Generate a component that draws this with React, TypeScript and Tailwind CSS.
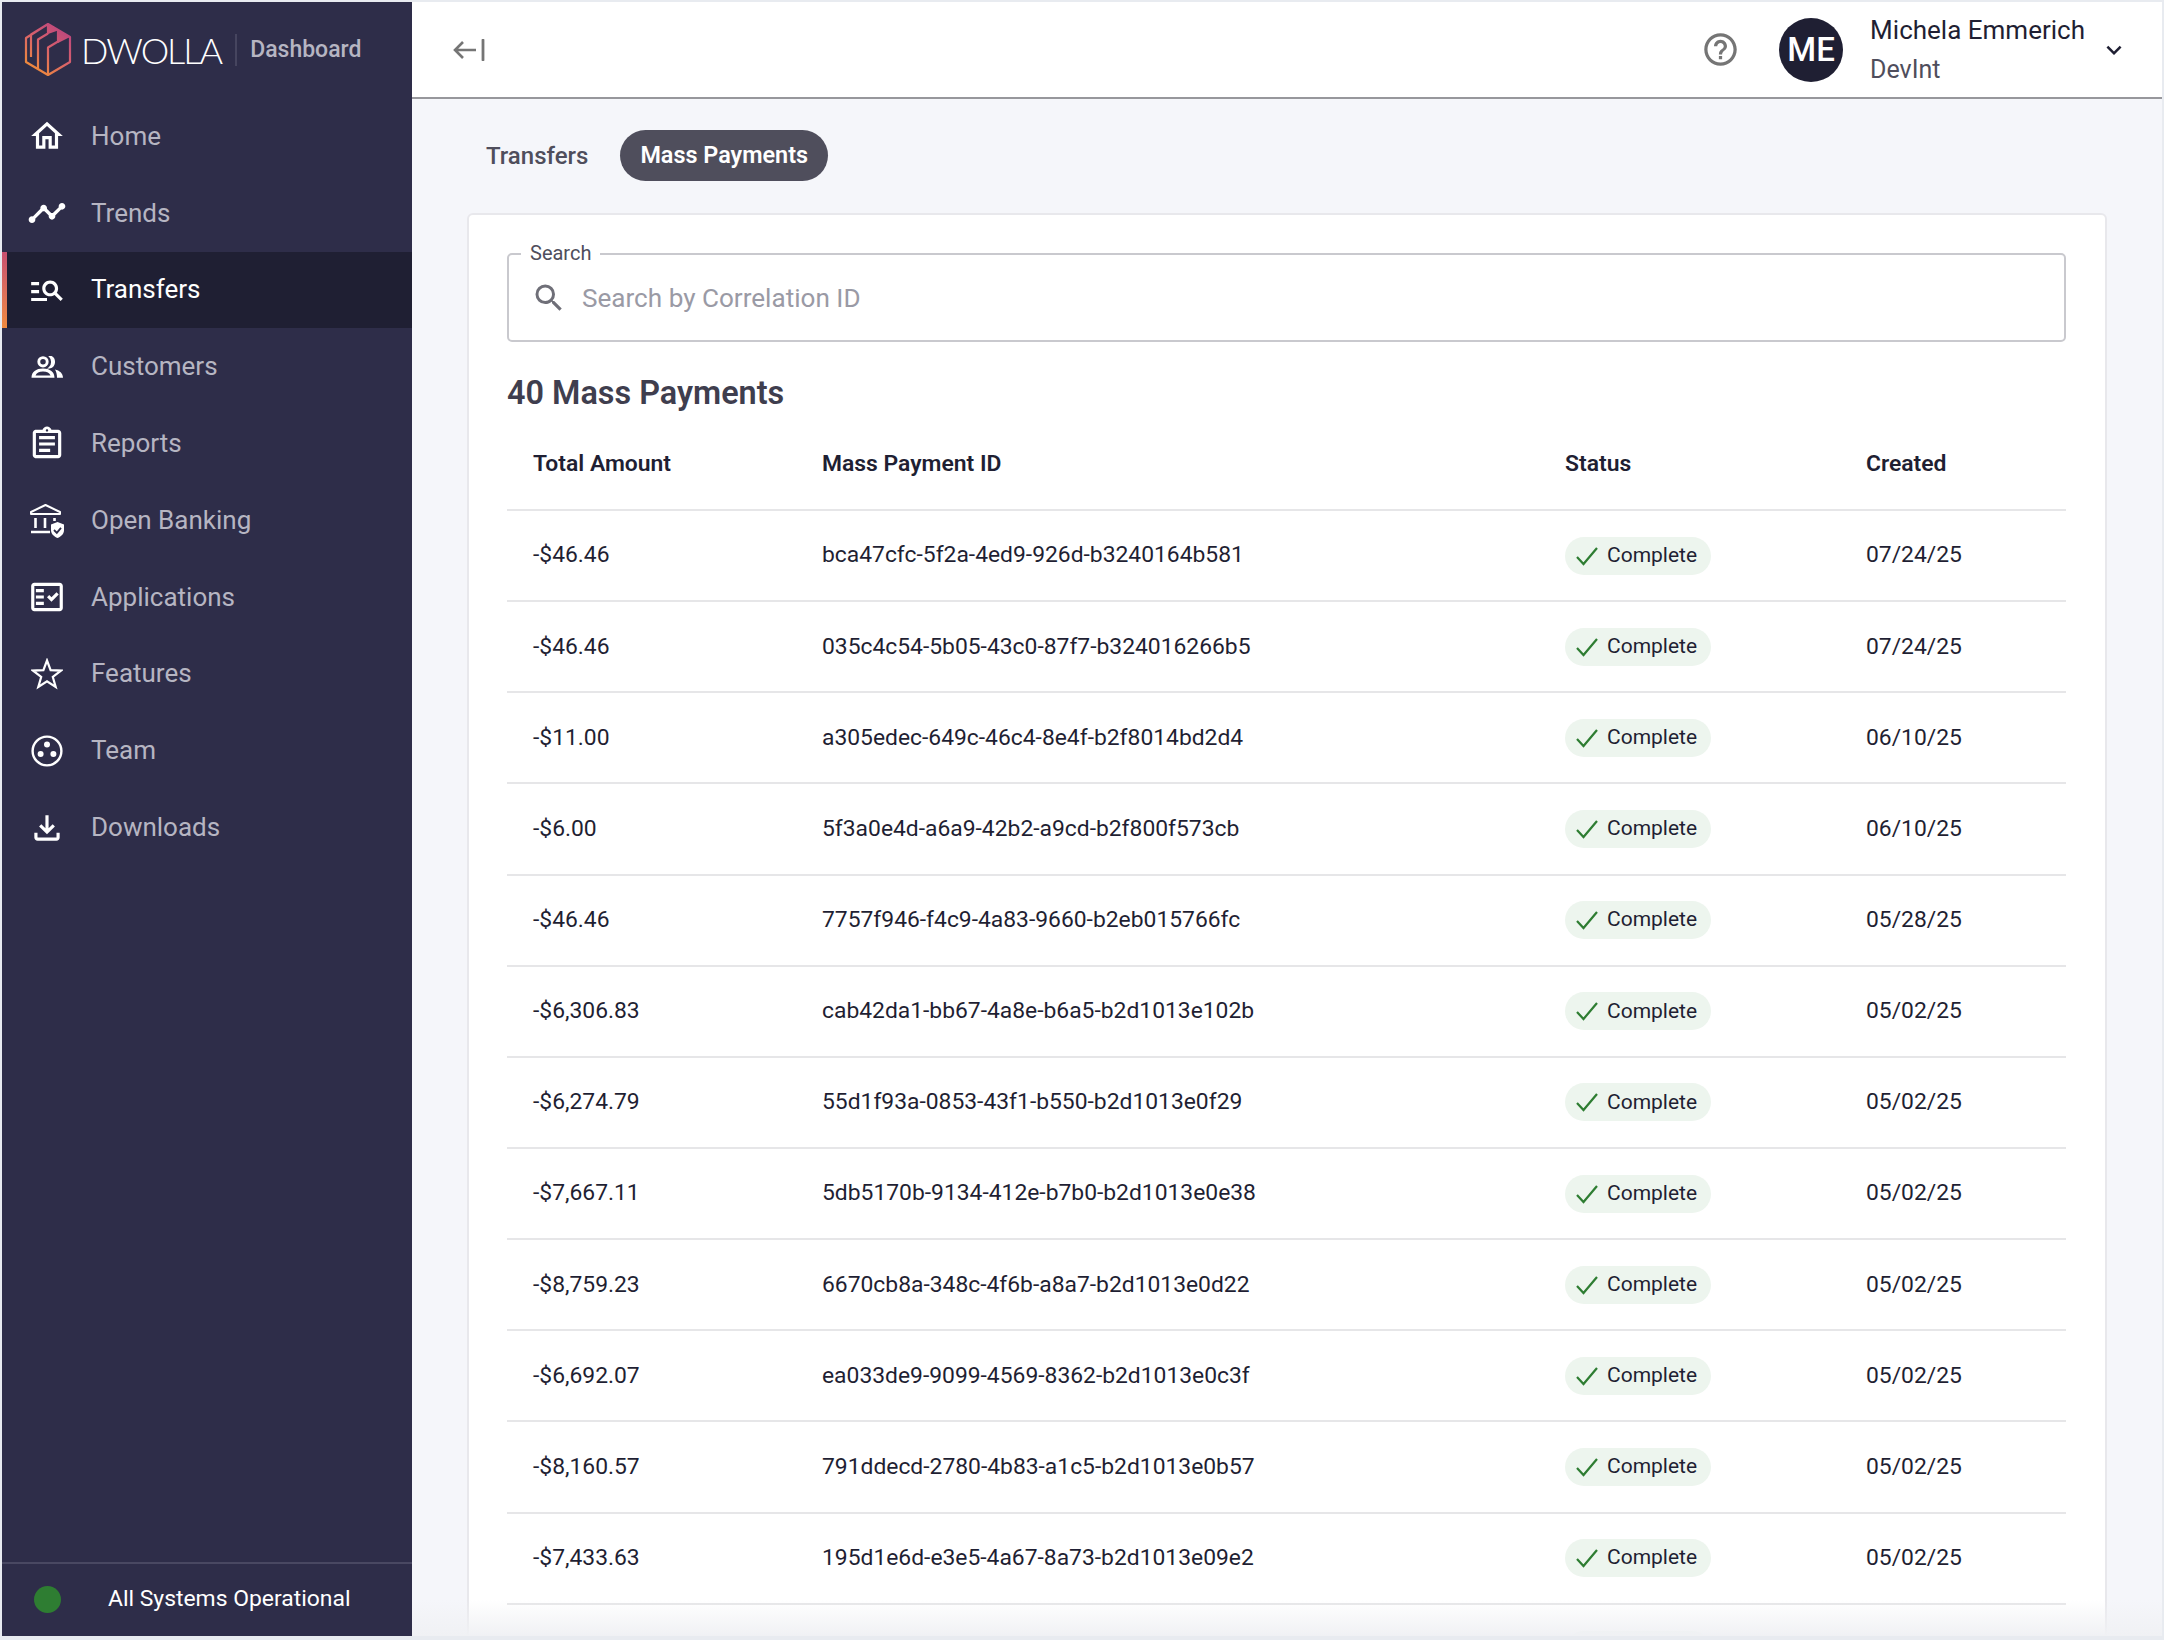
import React from "react";
import {
  MdOutlineManageSearch,
  MdOutlineAssignment,
  MdOutlineFactCheck,
  MdOutlineFileDownload,
  MdOutlineHelpOutline,
  MdSearch,
  MdExpandMore,
  MdTimeline,
  MdOutlineHome,
} from "react-icons/md";

const Bank = () => (
  <svg viewBox="0 0 36 36" className="w-[36px] h-[36px]" fill="none">
    <path d="M2 10 L16.5 3 L31 10 V12 H2 Z" stroke="#fff" strokeWidth="2" strokeLinejoin="round" />
    <path d="M6.5 16 V26 M16 16 V26 M25.5 16 V19 M2 30 H21" stroke="#fff" strokeWidth="2.6" />
    <path d="M28.5 20 L35 22.5 V28 C35 32 32 34.5 28.5 36 C25 34.5 22 32 22 28 V22.5 Z" fill="#fff" />
    <path d="M25 28 L27.8 30.8 L32 25.8" stroke="#2e2d49" strokeWidth="1.8" />
  </svg>
);

const Customers = () => (
  <svg viewBox="0 0 32 22" className="w-[32px] h-[22px]" fill="none">
    <circle cx="12" cy="5.8" r="4.2" stroke="#fff" strokeWidth="2.9" />
    <path d="M18.5 0.2 A5.8 5.8 0 0 1 18.5 11.6 A8 8 0 0 0 18.5 0.2 Z" fill="#fff" stroke="#fff" strokeWidth="1.6" />
    <path d="M0.5 21.8 C0.5 16 5 12.6 12 12.6 C19 12.6 23.5 16 23.5 21.8 Z M4.5 19.4 H19.5 C18.5 16.8 16 15.4 12 15.4 C8 15.4 5.5 16.8 4.5 19.4 Z" fill="#fff" fillRule="evenodd" />
    <path d="M24 13.6 C28.5 14.6 32 17.5 32 21.8 H26 C26 18.5 25.3 16 24 13.6 Z" fill="#fff" />
  </svg>
);

const Star = () => (
  <svg viewBox="0 0 32 32" className="w-[32px] h-[32px]" fill="none">
    <path d="M16 2.5 L19.6 12.2 L30 12.6 L21.8 19 L24.7 29 L16 23.3 L7.3 29 L10.2 19 L2 12.6 L12.4 12.2 Z" stroke="#fff" strokeWidth="2.2" strokeLinejoin="miter" />
  </svg>
);

const Team = () => (
  <svg viewBox="0 0 32 32" className="w-[32px] h-[32px]" fill="none">
    <circle cx="16" cy="16" r="14.4" stroke="#fff" strokeWidth="2.4" />
    <circle cx="16" cy="9.6" r="3" fill="#fff" />
    <circle cx="9.6" cy="19" r="3" fill="#fff" />
    <circle cx="22.4" cy="19" r="3" fill="#fff" />
  </svg>
);

const Logo = () => (
  <svg viewBox="4 4 48 56" className="w-[48px] h-[56px] shrink-0" fill="none">
    <defs>
      <linearGradient id="lg" x1="46" y1="8" x2="12" y2="52" gradientUnits="userSpaceOnUse">
        <stop offset="0" stopColor="#b8437f" />
        <stop offset="0.5" stopColor="#d8606c" />
        <stop offset="1" stopColor="#f08c3a" />
      </linearGradient>
    </defs>
    <path
      d="M28 6 L50 19 V44 L28 57 L6 44 V20 Z M28 6 L11 16.5 V39 M18 40 V21.5 L28 15.5 M28 15.5 V6 M28 51 V29.5 L38 23.5 V12.5 M28 57 L28 51 M18 50.8 V40"
      stroke="url(#lg)"
      strokeWidth="2.2"
      strokeLinejoin="round"
    />
    <path d="M28 6 L50 19 L38 25 V12.5 L28 16 Z" fill="url(#lg)" />
  </svg>
);

const navIcon = "w-[38px] h-[38px] text-white";

const nav: { label: string; icon: React.ReactNode; active?: boolean }[] = [
  { label: "Home", icon: <MdOutlineHome className={navIcon} /> },
  { label: "Trends", icon: <MdTimeline className="w-[40px] h-[40px] text-white" /> },
  { label: "Transfers", icon: <MdOutlineManageSearch className={navIcon} />, active: true },
  { label: "Customers", icon: <Customers /> },
  { label: "Reports", icon: <MdOutlineAssignment className={navIcon} /> },
  { label: "Open Banking", icon: <Bank /> },
  { label: "Applications", icon: <MdOutlineFactCheck className={navIcon} /> },
  { label: "Features", icon: <Star /> },
  { label: "Team", icon: <Team /> },
  { label: "Downloads", icon: <MdOutlineFileDownload className={navIcon} /> },
];

const rows = [
  ["-$46.46", "bca47cfc-5f2a-4ed9-926d-b3240164b581", "07/24/25"],
  ["-$46.46", "035c4c54-5b05-43c0-87f7-b324016266b5", "07/24/25"],
  ["-$11.00", "a305edec-649c-46c4-8e4f-b2f8014bd2d4", "06/10/25"],
  ["-$6.00", "5f3a0e4d-a6a9-42b2-a9cd-b2f800f573cb", "06/10/25"],
  ["-$46.46", "7757f946-f4c9-4a83-9660-b2eb015766fc", "05/28/25"],
  ["-$6,306.83", "cab42da1-bb67-4a8e-b6a5-b2d1013e102b", "05/02/25"],
  ["-$6,274.79", "55d1f93a-0853-43f1-b550-b2d1013e0f29", "05/02/25"],
  ["-$7,667.11", "5db5170b-9134-412e-b7b0-b2d1013e0e38", "05/02/25"],
  ["-$8,759.23", "6670cb8a-348c-4f6b-a8a7-b2d1013e0d22", "05/02/25"],
  ["-$6,692.07", "ea033de9-9099-4569-8362-b2d1013e0c3f", "05/02/25"],
  ["-$8,160.57", "791ddecd-2780-4b83-a1c5-b2d1013e0b57", "05/02/25"],
  ["-$7,433.63", "195d1e6d-e3e5-4a67-8a73-b2d1013e09e2", "05/02/25"],
];

const gridCols = "grid grid-cols-[289px_743px_301px_1fr] pl-[26px] items-center";

const Pill = () => (
  <span className="inline-flex items-center h-[38px] w-[146px] rounded-full bg-[#edf5ee] pl-[10px] text-[#1f1f33] text-[21px]">
    <svg viewBox="0 0 24 24" className="w-[24px] h-[24px] shrink-0" fill="none">
      <path d="M2 13 L8.5 20 L22 4" stroke="#2e7d32" strokeWidth="2.2" />
    </svg>
    <span className="ml-[8px]">Complete</span>
  </span>
);

export default function App() {
  return (
    <div className="w-[2164px] h-[1640px] overflow-hidden bg-[#e8ebf0] pt-[2px] pl-[2px] pr-[2px] pb-[4px] font-['Roboto',sans-serif]">
      <div className="relative flex h-full w-full bg-[#f5f6fa] overflow-hidden">
        <aside className="w-[410px] shrink-0 h-full bg-[#2e2d49] flex flex-col">
          <div className="h-[96px] shrink-0 flex items-center pl-[22px]">
            <Logo />
            <span className="ml-[9px] font-['Lato',sans-serif] font-light text-[36px] leading-none text-white tracking-[-2px]">DWOLLA</span>
            <span className="ml-[14px] w-[2px] h-[32px] bg-[#46455f]" />
            <span className="ml-[13px] text-[23px] font-medium text-[#b6b5c2]">Dashboard</span>
          </div>
          <nav className="flex flex-col">
            {nav.map((n) => (
              <div
                key={n.label}
                className={`relative h-[76.8px] flex items-center ${n.active ? "bg-[#1f1f33] text-white" : "text-[#b6b5c2]"}`}
              >
                {n.active && (
                  <span className="absolute left-0 top-0 bottom-0 w-[5px] bg-gradient-to-b from-[#c8506f] to-[#f08a3c]" />
                )}
                <span className="w-[89px] shrink-0 flex justify-center">{n.icon}</span>
                <span className="text-[26px] font-normal">{n.label}</span>
              </div>
            ))}
          </nav>
          <div className="mt-auto h-[74px] border-t-2 border-[#494862] flex items-center pl-[32px] pb-[2px]">
            <span className="w-[27px] h-[27px] rounded-full bg-[#2e7d32]" />
            <span className="ml-[47px] text-[22.9px] text-white">All Systems Operational</span>
          </div>
        </aside>

        <main className="flex-1 flex flex-col min-w-0">
          <header className="h-[97px] shrink-0 bg-white border-b-2 border-[#97979c] flex items-center pl-[40px] pr-[33px]">
            <svg viewBox="0 0 34 22" className="w-[34px] h-[22px]" fill="none">
              <path d="M24 11 H3 M11 3 L3 11 L11 19" stroke="#757575" strokeWidth="2.6" />
              <path d="M31 1 V21" stroke="#757575" strokeWidth="2.8" strokeLinecap="round" />
            </svg>
            <MdOutlineHelpOutline className="ml-auto w-[39px] h-[39px] text-[#757575]" />
            <div className="ml-[39px] w-[64px] h-[64px] rounded-full bg-[#1f1f33] flex items-center justify-center text-white text-[33px] font-medium">ME</div>
            <div className="ml-[27px] flex flex-col">
              <span className="text-[26px] leading-[39px] text-[#1f1f33]">Michela Emmerich</span>
              <span className="text-[25px] leading-[39px] text-[#4f4e5c]">DevInt</span>
            </div>
            <MdExpandMore className="ml-[14px] w-[30px] h-[30px] text-[#1f1f33]" />
          </header>

          <div className="flex-1 min-h-0 pl-[55px] pr-[55px] pt-[31px]">
            <div className="flex items-center gap-[13px] h-[51px]">
              <span className="h-[51px] px-[19px] flex items-center text-[24px] font-medium text-[#4f4e5c]">Transfers</span>
              <span className="h-[51px] px-[20px] flex items-center rounded-full bg-[#4f4e5c] text-[23.4px] font-semibold text-white">Mass Payments</span>
            </div>

            <section className="mt-[32px] bg-white border-2 border-[#e8e8ec] rounded-[6px] pt-[38px] pl-[38px] pr-[39px] h-[1500px]">
              <div className="relative h-[89px] border-2 border-[#c9c9ce] rounded-[5px] flex items-center pl-[22px]">
                <span className="absolute left-[12px] top-[-15px] bg-white px-[9px] text-[20px] leading-[26px] text-[#4f4e5c]">Search</span>
                <MdSearch className="w-[36px] h-[36px] text-[#6f6f78]" />
                <span className="ml-[15px] mt-[2px] text-[26.1px] text-[#9a9aa5]">Search by Correlation ID</span>
              </div>
              <h2 className="mt-[31px] h-[40px] leading-[40px] text-[32.4px] font-semibold text-[#3f3e4e]">40 Mass Payments</h2>
              <div className={`${gridCols} mt-[5px] h-[93px] pt-[2px] border-b-2 border-[#e6e6e8] text-[22.9px] font-semibold text-[#1f1f33]`}>
                <span>Total Amount</span>
                <span>Mass Payment ID</span>
                <span>Status</span>
                <span>Created</span>
              </div>
              {rows.map((r, i) => (
                <div key={i} className={`${gridCols} h-[91.15px] border-b-2 border-[#e6e6e8] text-[22.85px] text-[#1f1f33]`}>
                  <span>{r[0]}</span>
                  <span>{r[1]}</span>
                  <span className="flex"><Pill /></span>
                  <span>{r[2]}</span>
                </div>
              ))}
              <div className={`${gridCols} h-[91.15px]`}>
                <span />
                <span />
                <span className="w-[146px] h-[38px] rounded-full bg-[#edf5ee]" />
                <span />
              </div>
            </section>
          </div>
        </main>

        <div className="absolute left-[410px] right-0 bottom-0 h-[36px] bg-gradient-to-b from-transparent to-[#f0f1f4]" />
      </div>
    </div>
  );
}
